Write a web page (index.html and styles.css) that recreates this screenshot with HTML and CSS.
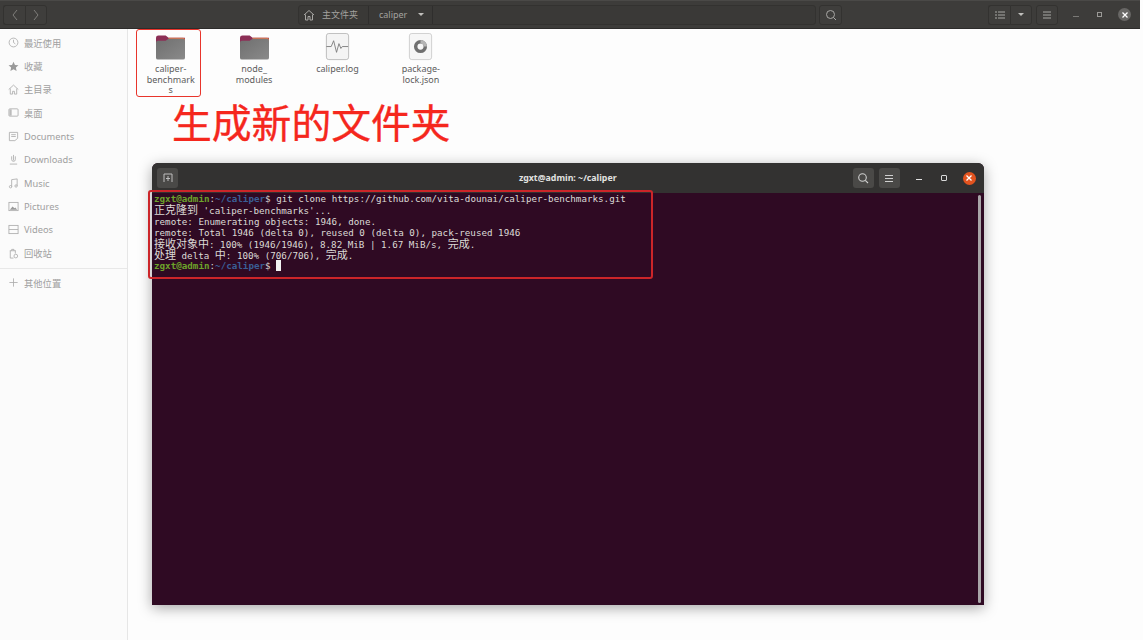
FILE: index.html
```html
<!DOCTYPE html>
<html lang="zh">
<head>
<meta charset="utf-8">
<title>caliper</title>
<link rel="stylesheet" href="styles.css">
</head>
<body>
<div class="desktop">
  <header class="fm-header">
    <div class="btn-group nav-group">
      <span class="hbtn nav-btn"><svg width="8" height="12" viewBox="0 0 8 12"><path d="M6 1 2 6l4 5" class="ico ico-dim"/></svg></span>
      <span class="hbtn nav-btn"><svg width="8" height="12" viewBox="0 0 8 12"><path d="M2 1l4 5-4 5" class="ico ico-dim"/></svg></span>
    </div>
    <div class="path-bar">
      <span class="crumb crumb-home"><svg width="12" height="12" viewBox="0 0 12 12"><path d="M1 6 6 1.500 11 6M2.500 5.500V11H5V7.500h2V11h2.500V5.500" class="ico"/></svg>主文件夹</span>
      <span class="crumb crumb-cur">caliper<i class="caret"></i></span>
      <span class="path-fill"></span>
    </div>
    <span class="hbtn search-btn"><svg width="12" height="12" viewBox="0 0 12 12"><circle cx="5.500" cy="5.500" r="4" class="ico"/><path d="m8.500 8.500 2.500 2.500" class="ico"/></svg></span>
    <div class="btn-group view-group">
      <span class="hbtn view-btn"><svg width="10" height="8" viewBox="0 0 10 8"><path d="M0 1h2M0 4h2M0 7h2M3 1h7M3 4h7M3 7h7" class="ico"/></svg></span>
      <span class="hbtn view-btn"><i class="caret caret-solo"></i></span>
    </div>
    <span class="hbtn menu-btn"><svg width="10" height="8" viewBox="0 0 10 8"><path d="M1 1h8M1 4h8M1 7h8" class="ico"/></svg></span>
    <div class="win-controls">
      <span class="fm-min"></span>
      <span class="fm-max"></span>
      <span class="fm-close"><svg width="8" height="8" viewBox="0 0 8 8"><path d="m1.500 1.500 5 5m0-5-5 5" stroke="#fff" stroke-width="1.300" fill="none"/></svg></span>
    </div>
  </header>

  <div class="fm-body">
    <nav class="sidebar">
      <ul class="places">
        <li class="place"><svg class="pic" viewBox="0 0 12 12"><circle cx="6" cy="6" r="4.800" class="sico"/><path d="M6 3v3l2 1.500" class="sico"/></svg>最近使用</li>
        <li class="place"><svg class="pic" viewBox="0 0 12 12"><path d="m6 .8 1.600 3.500 3.800.4-2.800 2.500.8 3.700L6 9l-3.400 1.900.8-3.700L.6 4.700l3.800-.4z" fill="#9a9a9a"/></svg>收藏</li>
        <li class="place"><svg class="pic" viewBox="0 0 12 12"><path d="M.8 6 6 1.200 11.200 6M2.500 5v6H5V8h2v3h2.500V5" class="sico"/></svg>主目录</li>
        <li class="place"><svg class="pic" viewBox="0 0 12 12"><rect x="1" y="2" width="10" height="8" rx="1" class="sico"/><path d="M1.500 2.500h2.500v7H1.500z" fill="#bbb"/></svg>桌面</li>
        <li class="place"><svg class="pic" viewBox="0 0 12 12"><path d="M1.500 1.500h9v6.500l-3 2.500h-6zM3.500 4h5M3.500 6h5" class="sico"/></svg>Documents</li>
        <li class="place"><svg class="pic" viewBox="0 0 12 12"><path d="M6 1v6M4 2.500V6a2 2 0 0 0 4 0V2.500M2 11h8" class="sico"/></svg>Downloads</li>
        <li class="place"><svg class="pic" viewBox="0 0 12 12"><path d="M4 9.500V1.800l6-.8v7.500" class="sico"/><circle cx="2.800" cy="9.500" r="1.300" class="sico"/><circle cx="8.800" cy="8.700" r="1.300" class="sico"/></svg>Music</li>
        <li class="place"><svg class="pic" viewBox="0 0 12 12"><rect x="1" y="1.500" width="10" height="9" class="sico"/><path d="m2 9.500 3-3.500 2 2 1-1 2 2.500z" fill="#999"/></svg>Pictures</li>
        <li class="place"><svg class="pic" viewBox="0 0 12 12"><rect x="1" y="1.500" width="10" height="9" class="sico"/><path d="M1 6h10" class="sico"/></svg>Videos</li>
        <li class="place"><svg class="pic" viewBox="0 0 12 12"><path d="M2 3h6.500M4 3V1.500h2.500V3M2.500 3v8H6M8 3v3" class="sico"/><circle cx="8.500" cy="8.800" r="2" class="sico"/></svg>回收站</li>
        <li class="place place-other"><svg class="pic" viewBox="0 0 12 12"><path d="M6 1.500v9M1.500 6h9" class="sico"/></svg>其他位置</li>
      </ul>
    </nav>

    <main class="files">
      <div class="file">
        <svg class="ficon" viewBox="0 0 30 26"><use href="#folder"/></svg>
        <span class="fname">caliper-<br>benchmark<br>s</span>
      </div>
      <div class="file">
        <svg class="ficon" viewBox="0 0 30 26"><use href="#folder"/></svg>
        <span class="fname">node_<br>modules</span>
      </div>
      <div class="file">
        <svg class="ficon" viewBox="0 0 30 30">
          <rect x="3.500" y=".5" width="23" height="27" rx="2.500" fill="#f4f4f4" stroke="#bdbdbd"/>
          <path d="M3.500 14h5l2.500-6 3 12 2.500-9 2 5 1.500-2h6" fill="none" stroke="#777" stroke-width=".9"/>
        </svg>
        <span class="fname">caliper.log</span>
      </div>
      <div class="file">
        <svg class="ficon" viewBox="0 0 30 30">
          <rect x="3.500" y=".5" width="23" height="27" rx="2.500" fill="#f6f6f6" stroke="#cfcfcf"/>
          <circle cx="15" cy="14" r="5" fill="none" stroke="#6f6f6f" stroke-width="3.600"/>
          <path d="M15 9a5 5 0 0 1 5 5" fill="none" stroke="#b5b5b5" stroke-width="3.600"/>
        </svg>
        <span class="fname">package-<br>lock.json</span>
      </div>
    </main>
  </div>

  <svg class="defs" width="0" height="0">
    <defs>
      <linearGradient id="fg" x1="0" y1="0" x2="1" y2="1"><stop offset="0" stop-color="#6f6f6f"/><stop offset="1" stop-color="#8a8a8a"/></linearGradient>
      <g id="folder">
        <path d="M0 3a2.500 2.500 0 0 1 2.500-2.500H10l3 2.500h17v8H0z" fill="#8c2f56"/>
        <path d="M13 3h15a2 2 0 0 1 2 2v3H13z" fill="#e2734a"/>
        <path d="M0 8a2 2 0 0 1 2-2h8l3-2h15a2 2 0 0 1 2 2v17.500a2 2 0 0 1-2 2H2a2 2 0 0 1-2-2z" fill="url(#fg)"/>
      </g>
    </defs>
  </svg>

  <div class="mark mark-folder"></div>
  <div class="headline">生成新的文件夹</div>

  <section class="terminal">
    <div class="t-bar">
      <span class="t-btn t-new"><svg width="10" height="10" viewBox="0 0 10 10"><path d="M1 9V1h8v8M5 3v5M3 5.500h4" stroke="#bdbdbd" fill="none"/></svg></span>
      <span class="t-title">zgxt@admin: ~/caliper</span>
      <span class="t-btn t-search"><svg width="12" height="12" viewBox="0 0 12 12"><circle cx="5.500" cy="5.500" r="3.800" class="tico"/><path d="m8.300 8.300 2.700 2.700" class="tico"/></svg></span>
      <span class="t-btn t-menu"><svg width="10" height="9" viewBox="0 0 10 9"><path d="M1 1.500h8M1 4.500h8M1 7.500h8" class="tico"/></svg></span>
      <span class="t-min"></span>
      <span class="t-max"></span>
      <span class="t-close"><svg width="8" height="8" viewBox="0 0 8 8"><path d="m1.500 1.500 5 5m0-5-5 5" stroke="#fff" stroke-width="1.300" fill="none"/></svg></span>
    </div>
    <div class="t-body">
      <div class="t-text">
        <div class="t-line"><span class="pg">zgxt@admin</span>:<span class="pb">~/caliper</span>$ git clone https://github.com/vita-dounai/caliper-benchmarks.git</div>
        <div class="t-line"><span class="cjk">正克隆到</span> 'caliper-benchmarks'...</div>
        <div class="t-line">remote: Enumerating objects: 1946, done.</div>
        <div class="t-line">remote: Total 1946 (delta 0), reused 0 (delta 0), pack-reused 1946</div>
        <div class="t-line"><span class="cjk">接收对象中</span>: 100% (1946/1946), 8.82 MiB | 1.67 MiB/s, <span class="cjk">完成</span>.</div>
        <div class="t-line"><span class="cjk">处理</span> delta <span class="cjk">中</span>: 100% (706/706), <span class="cjk">完成</span>.</div>
        <div class="t-line"><span class="pg">zgxt@admin</span>:<span class="pb">~/caliper</span>$ <span class="cursor"></span></div>
      </div>
      <span class="t-scroll"></span>
    </div>
  </section>

  <div class="mark mark-term"></div>
</div>
</body>
</html>
```
FILE: styles.css
```css
* { box-sizing: border-box; }
html, body { margin: 0; padding: 0; }
body { background: #fdfdfd; font-family: "Noto Sans", "Noto Sans CJK SC", sans-serif; overflow: hidden; }
.desktop { position: relative; width: 1143px; height: 640px; overflow: hidden; background: #fdfdfd; display: flex; flex-direction: column; }
.defs { position: absolute; }

.fm-header { width: 1140px; height: 29px; flex: none; background: #3d3c3a; border-top: 1px solid #4a4947; border-bottom: 1px solid #2d2c2b; display: flex; align-items: center; padding: 0 0 0 3px; color: #aaa9a6; font-size: 9px; }
.btn-group { display: flex; }
.hbtn { height: 20px; display: flex; align-items: center; justify-content: center; border: 1px solid #333230; background: #3f3e3c; border-radius: 3px; flex: none; }
.nav-group .nav-btn { width: 22px; }
.nav-group .nav-btn:first-child, .view-group .view-btn:first-child { border-radius: 3px 0 0 3px; border-right: 0; }
.nav-group .nav-btn:last-child, .view-group .view-btn:last-child { border-radius: 0 3px 3px 0; }
.ico { fill: none; stroke: #a9a8a5; stroke-width: 1; }
.ico-dim { stroke: #7f7e7b; }
.path-bar { margin-left: 251px; height: 20px; width: 518px; flex: none; display: flex; border: 1px solid #333230; border-radius: 3px; background: #3a3937; }
.crumb { display: flex; align-items: center; border-right: 1px solid #2f2e2d; height: 100%; font-size: 9px; color: #a3a29f; }
.crumb-home { width: 70px; padding-left: 4px; gap: 7px; }
.crumb-cur { width: 64px; padding-left: 10px; }
.caret { width: 0; height: 0; border: 3px solid transparent; border-top: 3.500px solid #c0bfbc; border-bottom: 0; margin-left: 11px; }
.caret-solo { margin-left: 0; }
.path-fill { flex: 1; }
.search-btn { width: 23px; margin-left: 3px; }
.view-group { margin-left: 146px; }
.view-btn { width: 22px; }
.menu-btn { width: 22px; margin-left: 4px; }
.win-controls { display: flex; align-items: center; margin-left: 15px; }
.fm-min { width: 6px; height: 1px; background: #7a7976; margin-right: 18px; margin-top: 3px; }
.fm-max { width: 5px; height: 5px; border: 1px solid #9a9996; margin-right: 16px; }
.fm-close { width: 13px; height: 13px; border-radius: 50%; background: #686765; display: flex; align-items: center; justify-content: center; }

.fm-body { flex: 1; display: flex; min-height: 0; }
.sidebar { width: 128px; flex: none; background: #fbfbfb; border-right: 1px solid #e6e6e6; padding-top: 2px; }
.places { list-style: none; margin: 0; padding: 0; }
.place { height: 23.400px; display: flex; align-items: center; gap: 5px; padding-left: 8px; font-size: 9.300px; color: #a0a0a0; white-space: nowrap; }
.place-other { border-top: 1px solid #e8e8e8; margin-top: 3px; height: 29px; }
.pic { width: 11px; height: 11px; flex: none; }
.sico { fill: none; stroke: #ababab; stroke-width: .9; }

.files { flex: 1; display: flex; padding: 4px 0 0 1px; align-items: flex-start; }
.file { width: 83.400px; display: flex; flex-direction: column; align-items: center; }
.ficon { width: 29px; height: 29px; display: block; }
.fname { font-size: 9px; line-height: 10.500px; text-align: center; color: #5c5c5c; margin-top: 2px; }

.mark { position: absolute; border: 1.500px solid #e8352c; border-radius: 3px; pointer-events: none; }
.mark-folder { left: 136px; top: 29px; width: 65px; height: 68px; }
.mark-term { left: 148px; top: 190px; width: 505px; height: 89px; border-color: #cc2529; border-width: 2px; }
.headline { position: absolute; left: 172px; top: 93px; font-family: "Noto Sans CJK SC", sans-serif; font-size: 39.800px; line-height: 56px; color: #f5271d; -webkit-text-stroke: .35px #f5271d; white-space: nowrap; }

.terminal { position: absolute; left: 152px; top: 163px; width: 831.500px; height: 442px; border-radius: 6px 6px 0 0; box-shadow: 0 3px 14px rgba(0,0,0,.35); background: #2f0a23; display: flex; flex-direction: column; overflow: hidden; }
.t-bar { height: 30px; flex: none; background: #333231; display: flex; align-items: center; position: relative; padding: 0 8px 0 5px; }
.t-btn { width: 21px; height: 20px; background: #4a4947; border-radius: 3px; display: flex; align-items: center; justify-content: center; flex: none; position: relative; }
.tico { fill: none; stroke: #d0d0d0; stroke-width: 1.100; }
.t-title { position: absolute; left: 0; right: 0; text-align: center; font-size: 8.800px; font-weight: 700; color: #e2e2e0; }
.t-search { margin-left: auto; }
.t-menu { margin-left: 5px; }
.t-min { width: 6px; height: 1px; background: #e0e0e0; margin: 2px 0 0 16px; position: relative; }
.t-max { width: 6px; height: 6px; border: 1px solid #d8d8d8; border-radius: 1px; margin-left: 19px; position: relative; }
.t-close { width: 13px; height: 13px; background: #e2531f; border-radius: 50%; margin-left: 16px; display: flex; align-items: center; justify-content: center; position: relative; }
.t-body { flex: 1; display: flex; padding: 0 3px 0 2px; min-height: 0; }
.t-text { flex: 1; padding-top: .4px; font-family: "DejaVu Sans Mono", "Noto Sans CJK SC", monospace; font-size: 9.220px; color: #dcdad6; }
.t-line { height: 11.100px; line-height: 11.100px; white-space: pre; overflow: visible; }
.cjk { font-family: "Noto Sans CJK SC", sans-serif; font-size: 11px; line-height: 11.100px; }
.pg { color: #6da32a; font-weight: 700; }
.pb { color: #3a5f96; font-weight: 700; }
.cursor { display: inline-block; width: 5px; height: 10.500px; background: #f2f2f2; vertical-align: -2px; }
.t-scroll { width: 3px; height: 408px; margin-top: 2px; background: #a9a5a8; border-radius: 2px; flex: none; }
```
